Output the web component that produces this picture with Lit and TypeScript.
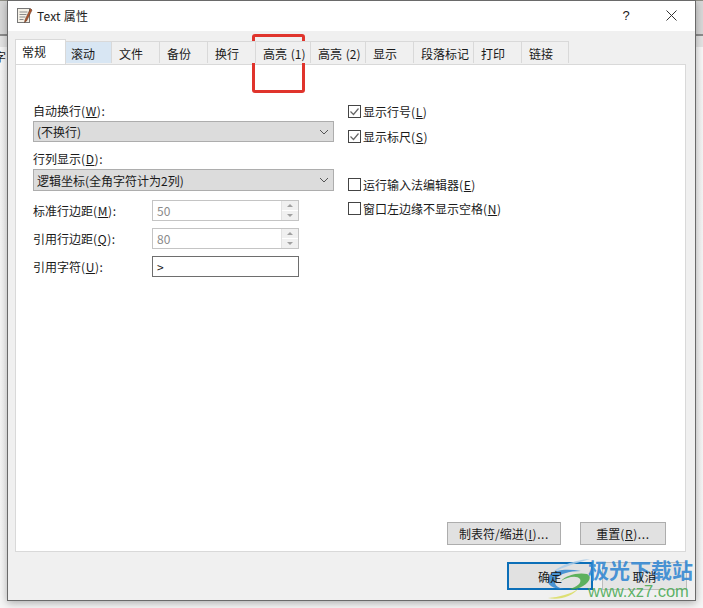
import { LitElement, html, css, svg } from "lit";
import { customElement } from "lit/decorators.js";

const TABS: [string, number][] = [
  ["滚动", 46], ["文件", 48], ["备份", 48], ["换行", 48], ["高亮 (1)", 55], ["高亮 (2)", 55],
  ["显示", 48], ["段落标记", 60], ["打印", 48], ["链接", 47],
];

const svgCheck = svg`<path d="M2.5 6.5l3 3 5-6" fill="none" stroke="#666" stroke-width="1.2"/>`;

@customElement("app-root")
export class AppRoot extends LitElement {
  static styles = css`
    :host { display: block; position: relative; width: 703px; height: 608px; overflow: hidden;
      background: linear-gradient(#f4f4f4, #f6f6f6);
      font-family: "Noto Sans CJK SC", "Liberation Sans", sans-serif; font-size: 12px; color: #1a1a1a; }
    .strip { position: absolute; top: 0; width: 8px; height: 70px; overflow: hidden;
      background: linear-gradient(#d8d8d8 0 34px, #8c8c8c 34px 36px, #e4e4e4 36px 47px, #f8f8f8 47px); }
    .strip-left { left: 0; font-size: 12px; line-height: 14px; }
    .strip-left span { display: block; margin: 50px 0 0 -6px; }
    .strip-right { right: 0; width: 7px; }
    .top-edge { position: absolute; left: 0; top: 0; width: 703px; height: 1px; background: #8f8f86; }
    .dialog { position: absolute; left: 7px; top: 0; width: 689px; height: 601px; box-sizing: border-box; border: 1px solid #6a6a6a;
      background: #f0f0f0; display: flex; flex-direction: column; box-shadow: 0 2px 8px rgba(0,0,0,.3); }
    .title { height: 28px; padding: 0 0 2px 8px; background: #fff; display: flex; align-items: center; flex: none; }
    .title-text { margin-left: 4px; font-size: 12px; letter-spacing: .2px; color: #222; flex: 1; }
    .help { width: 16px; text-align: center; font-family: "Liberation Sans", sans-serif; font-size: 13px; margin-right: 32px; }
    .close { margin-right: 18px; display: block; }
    .tabs { display: flex; padding: 9px 0 0 7px; height: 24px; flex: none; position: relative; z-index: 1; align-items: flex-end; }
    .tab { height: 22px; box-sizing: border-box; background: #f0f0f0; border: 1px solid #d9d9d9; border-left: 0; border-bottom: 0;
      display: flex; align-items: center; padding: 1px 0 0 7px; font-size: 12px; word-spacing: 1px; white-space: nowrap; overflow: hidden; flex: none; margin-bottom: 1px; }
    .tab.sel { height: 25px; background: #fff; border-left: 1px solid #d9d9d9; margin-bottom: 0; padding: 1px 0 2px 6px; }
    .tab.hover { background: #d8e6f3; padding-left: 5px; }
    .panel { margin: 0 9px 0 7px; height: 488px; box-sizing: border-box; background: #fff; border: 1px solid #d9d9d9; flex: none;
      display: flex; flex-direction: column; padding: 36px 17px 6px; }
    .cols { display: flex; flex: 1; }
    .left { width: 301px; display: flex; flex-direction: column; }
    .right { margin-left: 14px; display: flex; flex-direction: column; }
    .lbl { height: 20px; line-height: 20px; }
    .select { height: 22px; box-sizing: border-box; background: #dcdcdc; border: 1px solid #adadad; display: flex; align-items: center;
      justify-content: space-between; padding: 0 4px 0 3px; margin: 0 0 9px; }
    .select.first { height: 21px; margin-bottom: 7px; }
    .row { display: flex; align-items: center; height: 21px; margin-bottom: 7px; }
    .row .lbl { width: 119px; flex: none; }
    .k { letter-spacing: .6px; }
    .spin { width: 147px; height: 21px; box-sizing: border-box; border: 1px solid #c4c4c4; display: flex; color: #8a8a8a; background: #fff; }
    .spin .v, .input .v { flex: 1; padding-left: 4px; line-height: 19px; }
    .input { width: 147px; height: 21px; box-sizing: border-box; border: 1px solid #6e6e6e; display: flex; background: #fff; }
    .arrows { width: 16px; border-left: 1px solid #e2e2e2; display: flex; flex-direction: column; }
    .arrows span { flex: 1; background: #f0f0f0; display: flex; align-items: center; justify-content: center; }
    .arrows span + span { border-top: 1px solid #fff; }
    .tri { width: 0; height: 0; border-left: 3px solid transparent; border-right: 3px solid transparent; }
    .tri.up { border-bottom: 3px solid #a0a0a0; }
    .tri.down { border-top: 3px solid #a0a0a0; }
    .check { display: flex; align-items: center; height: 20px; white-space: nowrap; margin-bottom: 5px; }
    .check.gap { margin-top: 23px; margin-bottom: 4px; }
    .box { width: 13px; height: 13px; margin-right: 2px; flex: none; display: block; }
    u { text-underline-offset: 1px; }
    .buttons { display: flex; justify-content: flex-end; gap: 19px; margin-right: 2px; }
    .btn { height: 23px; box-sizing: border-box; background: #e1e1e1; border: 1px solid #adadad; display: flex; align-items: center; justify-content: center; }
    .b1 { width: 114px; } .b2 { width: 86px; }
    .footer { display: flex; justify-content: flex-end; gap: 9px; padding: 10px 8px 0 0; }
    .ok, .cancel { height: 28px; }
    .ok { width: 86px; border: 2px solid #0c6fb8; }
    .cancel { width: 85px; background: #e4e4e4; border-color: #bcbcbc; }
    .above { position: relative; z-index: 2; }
    .red { position: absolute; left: 252px; top: 34px; width: 53px; height: 59px; box-sizing: border-box; border: 3px solid #e0342c; border-radius: 3px; }
    .logo { position: absolute; left: 545px; top: 557px; display: block; }
    .wm1 { position: absolute; left: 588px; top: 556px; font-size: 21px; font-weight: 700; line-height: 27px; color: rgba(50,135,210,.9); white-space: nowrap; }
    .wm2 { position: absolute; left: 588px; top: 581px; font-family: "Liberation Sans", sans-serif; font-size: 16.5px; line-height: 20px; color: rgba(75,170,85,.9); white-space: nowrap; }
  `;

  render() {
    return html`
      <div class="strip strip-left"><span>字</span></div><div class="strip strip-right"></div><div class="top-edge"></div>
      <div class="dialog">
        <div class="title">
          <svg width="17" height="17" viewBox="0 0 17 17">
            <rect x="1.5" y="1.5" width="12" height="14" fill="#f6f2e8" stroke="#777"/>
            <path d="M3.5 5h8M3.5 7.5h7M3.5 10h6M3.5 12.5h4" stroke="#8c8c8c"/>
            <path d="M14.5 1.5 L9 13 L8.5 15.5 L10.5 14 L16 3 Z" fill="#b5562c" stroke="#5e3a28" stroke-width=".6"/>
          </svg>
          <span class="title-text">Text 属性</span>
          <span class="help">?</span>
          <svg class="close" width="11" height="11" viewBox="0 0 11 11"><path d="M.5 .5l10 10M10.5 .5l-10 10" stroke="#333"/></svg>
        </div>
        <div class="tabs">
          <div class="tab sel" style="width:51px">常规</div>
          ${TABS.map(([t, w], i) => html`<div class="tab ${i === 0 ? "hover" : ""}" style="width:${w}px">${t}</div>`)}
        </div>
        <div class="panel">
          <div class="cols">
            <div class="left">
              <div class="lbl">自动换行<span class="k">(<u>W</u>):</span></div>
              <div class="select first"><span>(不换行)</span>${this.chev()}</div>
              <div class="lbl">行列显示<span class="k">(<u>D</u>):</span></div>
              <div class="select"><span>逻辑坐标(全角字符计为2列)</span>${this.chev()}</div>
              <div class="row"><span class="lbl">标准行边距<span class="k">(<u>M</u>):</span></span>${this.spin("50")}</div>
              <div class="row"><span class="lbl">引用行边距<span class="k">(<u>Q</u>):</span></span>${this.spin("80")}</div>
              <div class="row"><span class="lbl">引用字符<span class="k">(<u>U</u>):</span></span><div class="input"><span class="v">&gt;</span></div></div>
            </div>
            <div class="right">
              ${this.check(true, "显示行号", "L", false)}
              ${this.check(true, "显示标尺", "S", false)}
              ${this.check(false, "运行输入法编辑器", "E", true)}
              ${this.check(false, "窗口左边缘不显示空格", "N", false)}
            </div>
          </div>
          <div class="buttons">
            <div class="btn b1">制表符/缩进<span class="k">(<u>I</u>)...</span></div>
            <div class="btn b2">重置<span class="k">(<u>R</u>)...</span></div>
          </div>
        </div>
        <div class="footer">
          <div class="btn ok"><span class="above">确定</span></div>
          <div class="btn cancel"><span class="above">取消</span></div>
        </div>
      </div>
      <div class="red"></div>
      <svg class="logo" width="48" height="44" viewBox="0 0 48 44">
        <path d="M45 2 C30 3 12 9 5 18 C12 12 28 7 45 2 Z" fill="#a9cbe8" opacity=".85"/>
        <path d="M5 18 C-1 26 6 33 20 32 C12 31 8 27 11 22 C14 17 24 14 36 14 C24 12 10 12 5 18 Z" fill="#2f86d0" opacity=".85"/>
        <path d="M16 24 C20 19 32 15 42 17 C47 19 45 25 38 29 C33 32 28 33 24 32 C32 30 37 26 35 22 C32 18 22 20 16 24 Z" fill="#45a845" opacity=".85"/>
        <path d="M3 41 C14 40 26 37 33 32 C29 38 15 44 3 41 Z" fill="#d9dc5e" opacity=".85"/>
      </svg>
      <div class="wm1">极光下载站</div>
      <div class="wm2">www.xz7.com</div>
    `;
  }

  chev() {
    return html`<svg width="10" height="6" viewBox="0 0 10 6"><path d="M1 1l4 4 4-4" fill="none" stroke="#555"/></svg>`;
  }
  spin(v: string) {
    return html`<div class="spin"><span class="v">${v}</span><div class="arrows"><span><i class="tri up"></i></span><span><i class="tri down"></i></span></div></div>`;
  }
  check(on: boolean, t: string, k: string, gap: boolean) {
    return html`<div class="check ${gap ? "gap" : ""}">
      <svg class="box" viewBox="0 0 13 13"><rect x=".5" y=".5" width="12" height="12" fill="#fff" stroke="#444"/>
      ${on ? svgCheck : ""}</svg>${t}<span class="k">(<u>${k}</u>)</span>
    </div>`;
  }
}
